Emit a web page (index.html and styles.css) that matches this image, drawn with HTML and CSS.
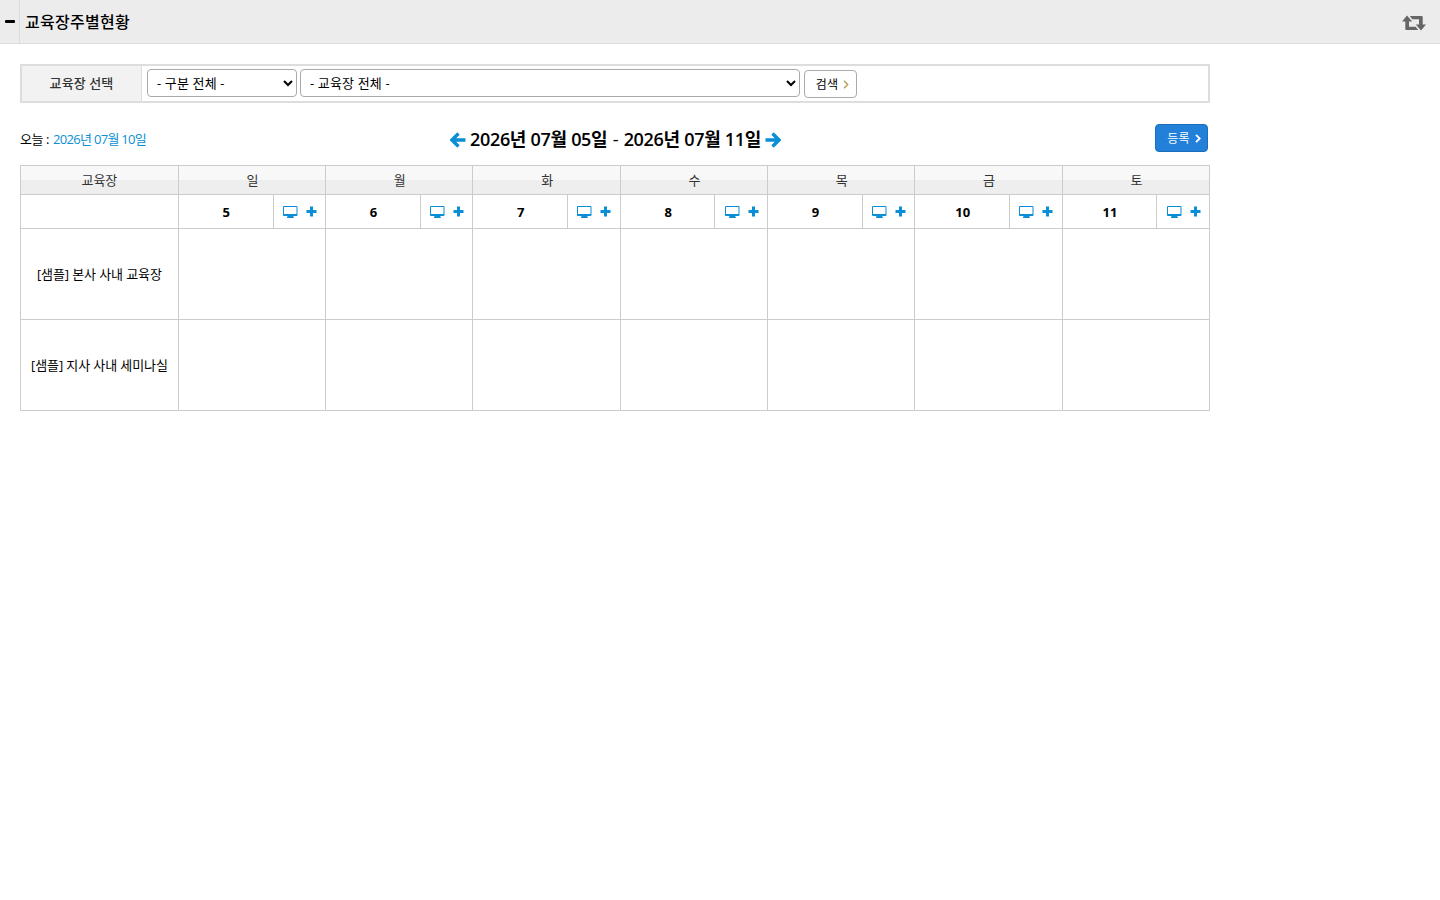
FILE: index.html
```
<!DOCTYPE html>
<html lang="ko">
<head>
    <meta charset="UTF-8">
    <title>교육장주별현황</title>
    <link rel="stylesheet" href="styles.css">
</head>
<body>
    <svg class="symbols" width="0" height="0">
        <symbol id="pc" viewBox="0 0 15 12">
            <path fill-rule="evenodd" d="M1 0h12.500a1 1 0 0 1 1 1v8a1 1 0 0 1-1 1H10l.8 1v1H4v-1L4.800 10H1a1 1 0 0 1-1-1V1a1 1 0 0 1 1-1zM1 1v7h12.500V1z"/>
        </symbol>
        <symbol id="plus" viewBox="0 0 11 11">
            <path d="M4 .5h3V4h3.500v3H7v3.500H4V7H.5V4H4z"/>
        </symbol>
    </svg>
    <div class="header">
        <div class="toggle"><span></span></div>
        <h1>교육장주별현황</h1>
        <svg class="refresh" width="24" height="16" viewBox="0 0 24 16">
            <path d="M5 .5L10.200 6.500H7v5.200h6.700l2.500 3.300H4.300a1 1 0 0 1-1-1V6.500H0z"/>
            <path d="M19 15.500L13.800 9.500H17V4.300h-6.700L7.800 1h11.900a1 1 0 0 1 1 1v7.500H24z"/>
        </svg>
    </div>
    <div class="container">
        <div class="search">
            <div class="label">교육장 선택</div>
            <div class="fields">
                <select class="gubun"><option>- 구분 전체 -</option></select>
                <select class="place"><option>- 교육장 전체 -</option></select>
                <button class="btn">검색<svg width="6" height="9" viewBox="0 0 6 9"><path d="M1 .8l3.700 3.700L1 8.200"/></svg></button>
            </div>
        </div>
        <div class="top">
            <p class="today">오늘 : <span>2026년 07월 10일</span></p>
            <div class="week">
                <svg width="16" height="16" viewBox="0 0 16 16"><path d="M8.500 1.500L2 8l6.500 6.500M2.500 8H15.500"/></svg>
                <strong>2026년 07월 05일 <i>-</i> 2026년 07월 11일</strong>
                <svg width="16" height="16" viewBox="0 0 16 16"><path d="M7.500 1.500L14 8l-6.500 6.500M13.500 8H.5"/></svg>
            </div>
            <button class="btn blue">등록<svg width="6" height="9" viewBox="0 0 6 9"><path d="M1 .8l3.700 3.700L1 8.200"/></svg></button>
        </div>
        <div class="calendar">
            <div class="row head">
                <div>교육장</div><div>일</div><div>월</div><div>화</div><div>수</div><div>목</div><div>금</div><div>토</div>
            </div>
            <div class="row days">
                <div></div>
                <div><b>5</b><span><svg class="pc"><use href="#pc"/></svg><svg class="plus"><use href="#plus"/></svg></span></div>
                <div><b>6</b><span><svg class="pc"><use href="#pc"/></svg><svg class="plus"><use href="#plus"/></svg></span></div>
                <div><b>7</b><span><svg class="pc"><use href="#pc"/></svg><svg class="plus"><use href="#plus"/></svg></span></div>
                <div><b>8</b><span><svg class="pc"><use href="#pc"/></svg><svg class="plus"><use href="#plus"/></svg></span></div>
                <div><b>9</b><span><svg class="pc"><use href="#pc"/></svg><svg class="plus"><use href="#plus"/></svg></span></div>
                <div><b>10</b><span><svg class="pc"><use href="#pc"/></svg><svg class="plus"><use href="#plus"/></svg></span></div>
                <div><b>11</b><span><svg class="pc"><use href="#pc"/></svg><svg class="plus"><use href="#plus"/></svg></span></div>
            </div>
            <div class="row">
                <div>[샘플] 본사 사내 교육장</div><div></div><div></div><div></div><div></div><div></div><div></div><div></div>
            </div>
            <div class="row">
                <div>[샘플] 지사 사내 세미나실</div><div></div><div></div><div></div><div></div><div></div><div></div><div></div>
            </div>
        </div>
    </div>
</body>
</html>
```
FILE: styles.css
```
* {
    box-sizing: border-box;
}
body {
    margin: 0;
    background: #fff;
    color: #000;
    font-family: "Open Sans", "Noto Sans CJK KR", sans-serif;
    font-size: 13px;
    line-height: 18px;
    letter-spacing: -0.1px;
}
.symbols {
    display: none;
}
.header {
    display: flex;
    align-items: center;
    height: 44px;
    background: #ececec;
    border-bottom: 1px solid #dcdcdc;
    padding-right: 14px;
}
.toggle {
    display: flex;
    align-items: center;
    justify-content: center;
    width: 20px;
    height: 43px;
    border-right: 1px solid #dcdcdc;
}
.toggle span {
    width: 10px;
    height: 3px;
    border-radius: 1px;
    background: #000;
}
h1 {
    flex: 1;
    margin: 0 0 0 5px;
    font-size: 16px;
    font-weight: 500;
    letter-spacing: 0.3px;
}
.refresh {
    fill: #666;
    margin-top: 2px;
}
.container {
    width: 1190px;
    margin: 20px 0 0 20px;
}
.search {
    display: flex;
    height: 39px;
    border: 2px solid #ddd;
}
.label {
    display: flex;
    align-items: center;
    justify-content: center;
    width: 120px;
    padding-bottom: 1px;
    background: #f2f2f2;
    border-right: 1px solid #ddd;
    color: #333;
    font-weight: 500;
    letter-spacing: 0.1px;
}
.fields {
    display: flex;
    align-items: flex-start;
    gap: 3px;
    padding: 3px 0 0 5px;
}
select {
    height: 28px;
    padding: 0 0 0 5px;
    border: 1px solid #aaa;
    border-radius: 4px;
    background: #fff;
    color: #000;
    font: inherit;
    letter-spacing: 0.15px;
}
.gubun {
    width: 150px;
}
.place {
    width: 500px;
}
.btn {
    display: flex;
    align-items: center;
    justify-content: center;
    gap: 5px;
    width: 53px;
    height: 28px;
    margin: 1px 0 0 1px;
    padding: 0 0 0 4px;
    border: 1px solid #aaa;
    border-radius: 4px;
    background: #fff;
    color: #000;
    font-family: inherit;
    font-size: 12px;
    letter-spacing: 0.1px;
}
.btn path {
    fill: none;
    stroke: #b99a55;
    stroke-width: 1.4;
}
.btn.blue {
    padding-left: 5px;
    background: #2380d8;
    border-color: #1b6dbb;
    color: #fff;
}
.blue path {
    stroke: #fff;
    stroke-width: 1.8;
}
.top {
    display: grid;
    grid-template-columns: 1fr auto 1fr;
    align-items: center;
    height: 62px;
    padding-right: 2px;
}
.top .btn {
    justify-self: end;
    margin: 8px 0 0;
}
.today {
    margin: 0;
    padding: 10px 0 0;
    letter-spacing: -0.4px;
}
.today span {
    margin-left: 1px;
    color: #0a8fd6;
    letter-spacing: -0.7px;
}
.week {
    display: flex;
    align-items: center;
    gap: 4px;
    margin: 12px 0 0 3px;
}
.week strong {
    margin-top: -2px;
    font-size: 18px;
    font-weight: 600;
    letter-spacing: -0.3px;
}
.week i {
    margin: 0 1px;
    font-style: normal;
    font-weight: 400;
}
.week path {
    fill: none;
    stroke: #0a8fd6;
    stroke-width: 3.4;
}
.calendar {
    border-top: 1px solid #ccc;
    border-left: 1px solid #ccc;
}
.row {
    display: grid;
    grid-template-columns: 157.8px repeat(7, 1fr);
    height: 91px;
}
.row > div {
    display: flex;
    align-items: center;
    justify-content: center;
    border-right: 1px solid #ccc;
    border-bottom: 1px solid #ccc;
}
.head {
    height: 29px;
    background: linear-gradient(#f8f8f8 14px, #eee 14px);
    color: #333;
}
.head div + div {
    padding-left: 1px;
}
.days {
    height: 34px;
}
.days b {
    flex: 1;
    padding-left: 1px;
    text-align: center;
    letter-spacing: 0;
}
.days span {
    display: flex;
    align-items: center;
    gap: 8px;
    width: 52.6px;
    height: 33px;
    padding-left: 9.2px;
    border-left: 1px solid #ccc;
}
.days svg {
    fill: #0a8fd6;
}
.pc {
    width: 15px;
    height: 12px;
}
.plus {
    width: 11px;
    height: 11px;
}
```
